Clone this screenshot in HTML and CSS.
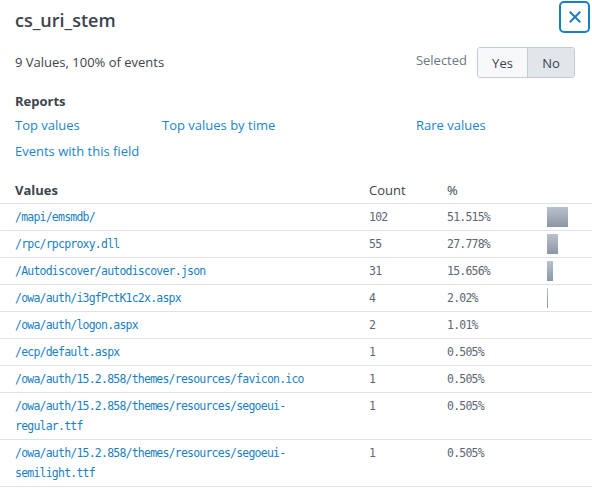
FILE: index.html
```html
<!DOCTYPE html>
<html>
<head>
<meta charset="utf-8">
<link rel="stylesheet" href="styles.css">
</head>
<body>
<div class="panel">
  <header class="head">
    <h1 class="title">cs_uri_stem</h1>
    <button class="close" aria-label="Close">
      <svg width="12" height="12" viewBox="0 0 12 12"><path d="M1.5 1.5 L10.5 10.5 M10.5 1.5 L1.5 10.5" stroke="#1a7fc1" stroke-width="2" fill="none" stroke-linecap="square"/></svg>
    </button>
  </header>
  <div class="summary">
    <span class="count-text">9 Values, 100% of events</span>
    <div class="selected">
      <span class="sel-label">Selected</span>
      <div class="toggle">
        <button class="tbtn yes">Yes</button>
        <button class="tbtn no">No</button>
      </div>
    </div>
  </div>
  <section class="reports">
    <h2 class="reports-title">Reports</h2>
    <div class="links">
      <a class="link">Top values</a>
      <a class="link">Top values by time</a>
      <a class="link">Rare values</a>
      <a class="link">Events with this field</a>
    </div>
  </section>
  <table class="values">
    <colgroup><col class="c1"><col class="c2"><col class="c3"><col class="c4"></colgroup>
    <thead>
      <tr><th class="h-val">Values</th><th>Count</th><th>%</th><th></th></tr>
    </thead>
    <tbody>
      <tr><td class="val">/mapi/emsmdb/</td><td class="num">102</td><td class="num">51.515%</td><td><span class="bar" style="width:21px"></span></td></tr>
      <tr><td class="val">/rpc/rpcproxy.dll</td><td class="num">55</td><td class="num">27.778%</td><td><span class="bar" style="width:11px"></span></td></tr>
      <tr><td class="val">/Autodiscover/autodiscover.json</td><td class="num">31</td><td class="num">15.656%</td><td><span class="bar" style="width:6px"></span></td></tr>
      <tr><td class="val">/owa/auth/i3gfPctK1c2x.aspx</td><td class="num">4</td><td class="num">2.02%</td><td><span class="bar" style="width:1px"></span></td></tr>
      <tr><td class="val">/owa/auth/logon.aspx</td><td class="num">2</td><td class="num">1.01%</td><td></td></tr>
      <tr><td class="val">/ecp/default.aspx</td><td class="num">1</td><td class="num">0.505%</td><td></td></tr>
      <tr><td class="val">/owa/auth/15.2.858/themes/resources/favicon.ico</td><td class="num">1</td><td class="num">0.505%</td><td></td></tr>
      <tr><td class="val">/owa/auth/15.2.858/themes/resources/segoeui-regular.ttf</td><td class="num">1</td><td class="num">0.505%</td><td></td></tr>
      <tr><td class="val">/owa/auth/15.2.858/themes/resources/segoeui-semilight.ttf</td><td class="num">1</td><td class="num">0.505%</td><td></td></tr>
    </tbody>
  </table>
</div>
</body>
</html>
```
FILE: styles.css
```css
* { box-sizing: border-box; }
html, body { margin: 0; padding: 0; background: #fff; }
body {
  font-family: "Open Sans", "Liberation Sans", sans-serif;
  font-size: 13px;
  color: #3c444d;
}
.panel { width: 592px; }

.head {
  display: flex;
  justify-content: space-between;
  align-items: flex-start;
  padding: 1px 2px 0 15px;
  height: 35px;
}
.title {
  margin: 0;
  font-size: 18px;
  font-weight: 600;
  line-height: 38px;
  color: #3c444d;
}
.close {
  width: 31px;
  height: 32px;
  border: 2px solid #1a7fc1;
  border-radius: 5px;
  background: #fff;
  padding: 0;
  display: flex;
  align-items: center;
  justify-content: center;
}

.summary {
  display: flex;
  justify-content: space-between;
  align-items: center;
  margin-top: 12px;
  padding: 0 17px 0 15px;
}
.count-text { font-size: 13px; margin-bottom: 2px; }
.selected { display: flex; align-items: center; gap: 10px; }
.sel-label { color: #6b7785; font-size: 13px; margin-bottom: 6px; }
.toggle {
  display: flex;
  border: 1px solid #c3cbd4;
  border-radius: 3px;
  overflow: hidden;
  height: 31px;
}
.tbtn {
  border: 0;
  margin: 0;
  font-family: inherit;
  font-size: 13px;
  color: #3c444d;
  padding: 0;
}
.yes { width: 50px; background: #f7f8fa; border-right: 1px solid #c3cbd4; }
.no { width: 46px; background: #e1e6eb; }

.reports { padding: 0 15px; margin-top: 13px; }
.reports-title {
  margin: 0 0 4px;
  font-size: 13px;
  font-weight: 700;
  line-height: 20px;
}
.links {
  display: grid;
  grid-template-columns: 147px 254px auto;
  row-gap: 6px;
  line-height: 20px;
}
.link { color: #1a85c8; text-decoration: none; }

.values {
  width: 592px;
  margin-top: 16px;
  border-collapse: collapse;
  table-layout: fixed;
}
.c1 { width: 369px; }
.c2 { width: 78px; }
.c3 { width: 100px; }
.c4 { width: 45px; }
.values th {
  text-align: left;
  font-weight: 400;
  font-size: 13px;
  line-height: 20px;
  padding: 3px 0 3px;
  border-bottom: 1px solid #dde2e7;
}
.values th.h-val { font-weight: 700; padding-left: 15px; }
.values td {
  padding: 3px 0;
  line-height: 20px;
  vertical-align: top;
  border-bottom: 1px solid #dde2e7;
  font-family: "DejaVu Sans Mono", "Liberation Mono", monospace;
  font-size: 11.5px;
  letter-spacing: -0.78px;
}
.values td.val {
  padding-left: 15px;
  padding-right: 30px;
  color: #1a7fc1;
  overflow-wrap: normal;
}
.values td.num { color: #5c6773; }
.bar {
  display: block;
  height: 20px;
  background: linear-gradient(#b9c1cb, #8c97a4);
}
```
